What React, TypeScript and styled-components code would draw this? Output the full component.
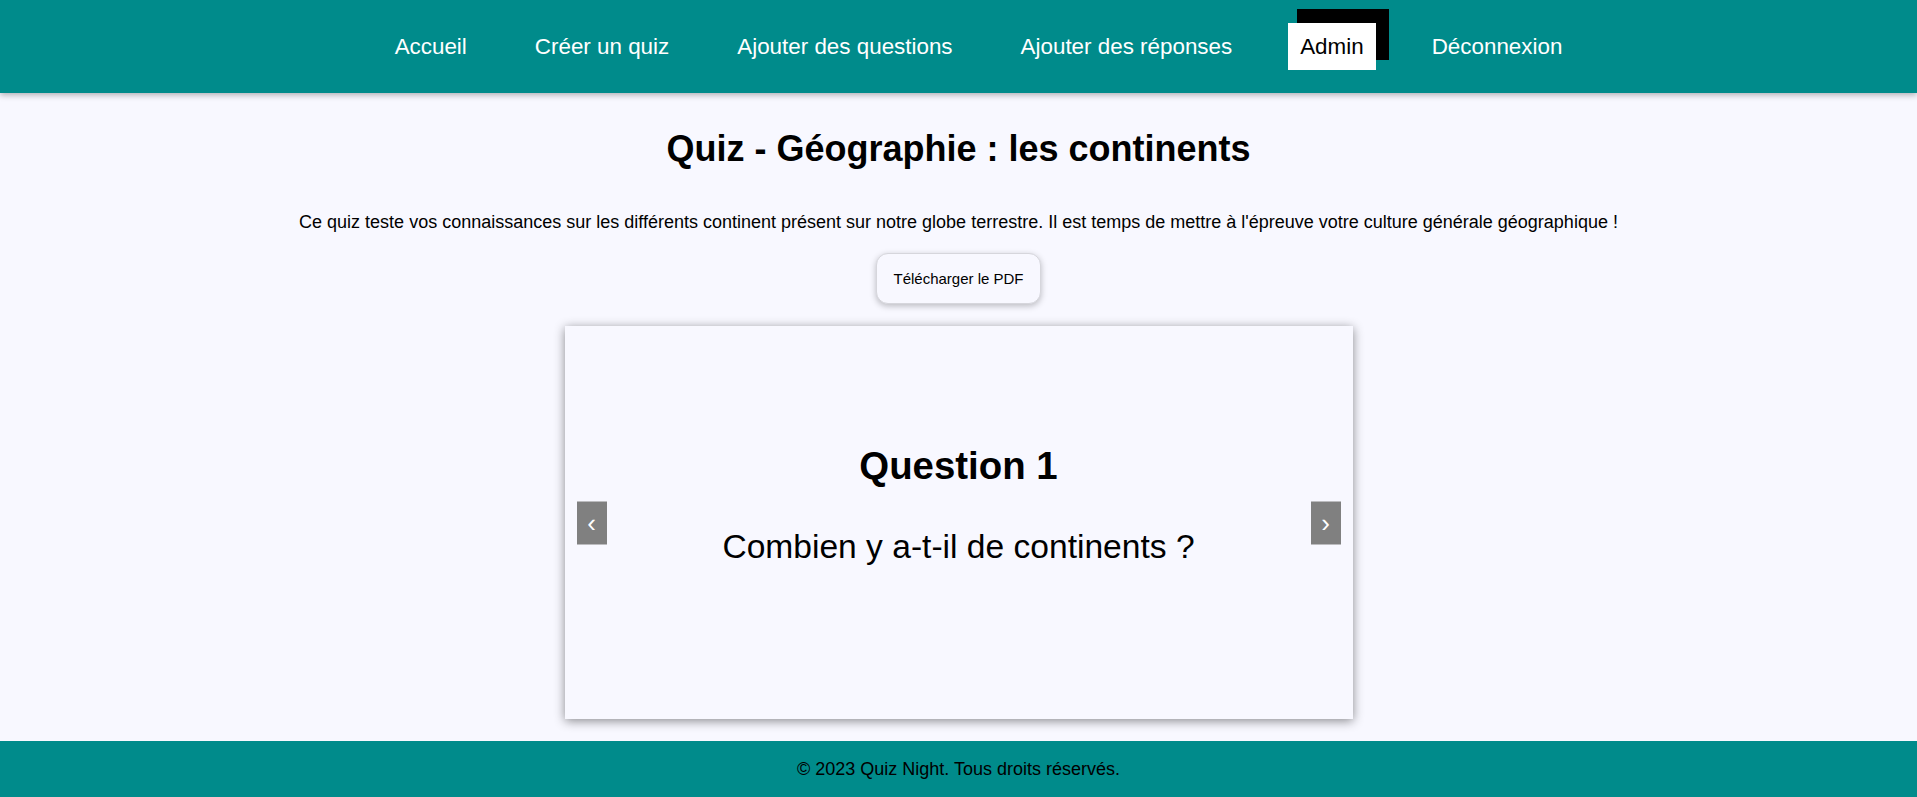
import React from "react";
import styled, { createGlobalStyle } from "styled-components";

const GlobalStyle = createGlobalStyle`
  html, body { margin: 0; padding: 0; }
  body {
    background: #f8f8ff;
    font-family: "Liberation Sans", Arial, sans-serif;
    color: #000;
  }
`;

const Page = styled.div`
  display: flex;
  flex-direction: column;
  min-height: 100vh;
`;

const Header = styled.header`
  position: relative;
  z-index: 2;
  height: 93px;
  background: #008b8b;
  box-shadow: 0 2px 6px rgba(0, 0, 0, 0.3);
  display: flex;
  align-items: center;
`;

const Nav = styled.nav`
  flex: 1;
`;

const NavList = styled.ul`
  list-style: none;
  margin: 0;
  padding: 0 0 0 40px;
  display: flex;
  justify-content: center;
  align-items: center;
  gap: 44px;
`;

const NavItem = styled.li`
  display: flex;
`;

const NavLink = styled.a<{ $active?: boolean }>`
  display: block;
  padding: 11px 12px;
  font-size: 22.4px;
  line-height: 25px;
  text-decoration: none;
  color: ${(p) => (p.$active ? "#000" : "#fff")};
  background: ${(p) => (p.$active ? "#fff" : "transparent")};
  box-shadow: ${(p) => (p.$active ? "11px -12px 0 2px #000" : "none")};
  cursor: pointer;
`;

const Main = styled.main`
  display: flex;
  flex-direction: column;
  align-items: center;
  text-align: center;
`;

const Title = styled.h1`
  margin: 35px 0 0;
  font-size: 36px;
  font-weight: bold;
`;

const Description = styled.p`
  margin: 42px 0 0;
  font-size: 18px;
`;

const PdfButton = styled.button`
  margin-top: 20px;
  padding: 16px 16px;
  font-family: "Liberation Sans", Arial, sans-serif;
  font-size: 15px;
  line-height: 17px;
  color: #000;
  background: #f8f8ff;
  border: 1px solid #d6d6dc;
  border-radius: 12px;
  box-shadow: 0 2px 6px rgba(0, 0, 0, 0.25);
  cursor: pointer;
`;

const Carousel = styled.section`
  position: relative;
  margin-top: 22px;
  width: 788px;
  height: 393px;
  box-sizing: border-box;
  padding-bottom: 36px;
  background: #f8f8ff;
  box-shadow: 0 2px 10px rgba(0, 0, 0, 0.45);
  display: flex;
  flex-direction: column;
  justify-content: center;
  align-items: center;
  gap: 40px;
`;

const QuestionTitle = styled.h2`
  margin: 0;
  font-size: 38.4px;
  font-weight: bold;
`;

const QuestionText = styled.p`
  margin: 0;
  font-size: 33.6px;
`;

const Arrow = styled.button<{ $side: "left" | "right" }>`
  position: absolute;
  top: 50%;
  ${(p) => (p.$side === "left" ? "left: 12px;" : "right: 12px;")}
  transform: translateY(-50%);
  width: 30px;
  height: 43px;
  padding: 0;
  border: none;
  background: #808080;
  color: #fff;
  font-family: "Liberation Sans", Arial, sans-serif;
  font-size: 26px;
  line-height: 40px;
  cursor: pointer;
`;

const Footer = styled.footer`
  margin-top: auto;
  height: 56px;
  background: #008b8b;
  display: flex;
  align-items: center;
  justify-content: center;
  font-size: 18px;
  color: #000;
`;

const links = [
  "Accueil",
  "Créer un quiz",
  "Ajouter des questions",
  "Ajouter des réponses",
  "Admin",
  "Déconnexion",
];

export default function App() {
  return (
    <Page>
      <GlobalStyle />
      <Header>
        <Nav>
          <NavList>
            {links.map((l) => (
              <NavItem key={l}>
                <NavLink $active={l === "Admin"}>{l}</NavLink>
              </NavItem>
            ))}
          </NavList>
        </Nav>
      </Header>
      <Main>
        <Title>Quiz - Géographie : les continents</Title>
        <Description>
          Ce quiz teste vos connaissances sur les différents continent présent sur notre globe
          terrestre. Il est temps de mettre à l'épreuve votre culture générale géographique !
        </Description>
        <PdfButton>Télécharger le PDF</PdfButton>
        <Carousel>
          <QuestionTitle>Question 1</QuestionTitle>
          <QuestionText>Combien y a-t-il de continents ?</QuestionText>
          <Arrow $side="left">‹</Arrow>
          <Arrow $side="right">›</Arrow>
        </Carousel>
      </Main>
      <Footer>© 2023 Quiz Night. Tous droits réservés.</Footer>
    </Page>
  );
}
